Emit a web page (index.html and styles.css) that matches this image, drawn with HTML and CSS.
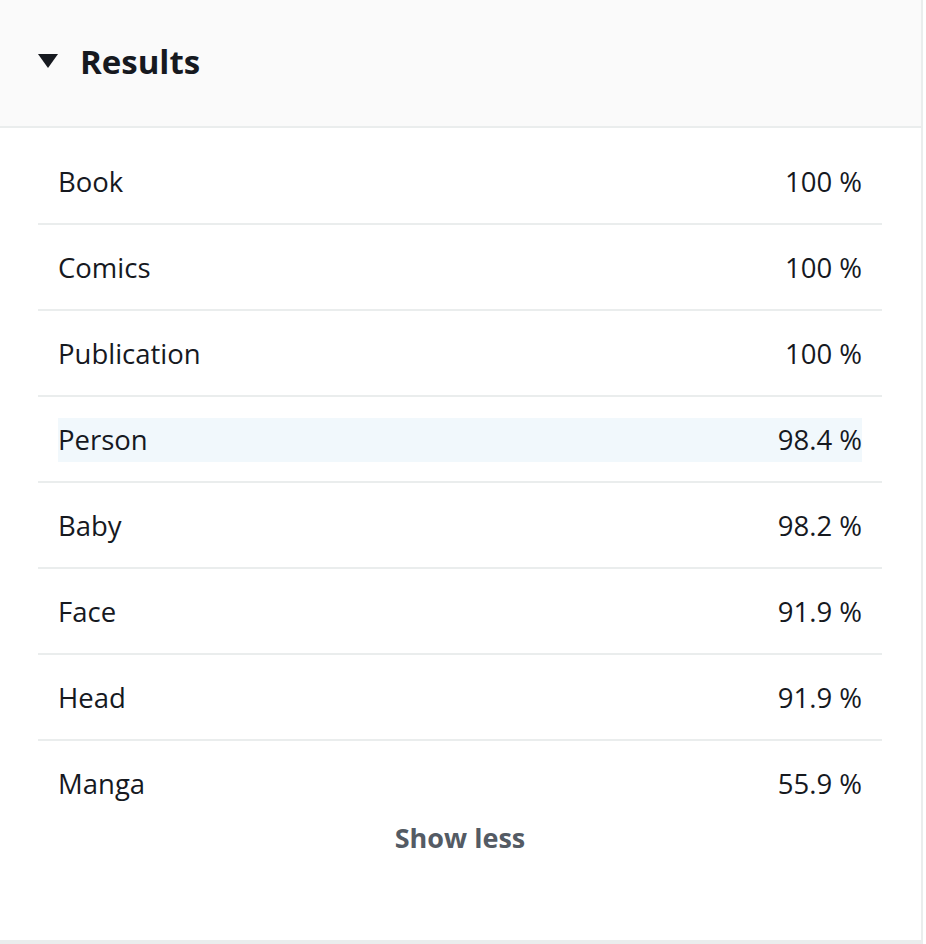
FILE: index.html
```html
<!DOCTYPE html>
<html>
<head>
<meta charset="utf-8">
<link rel="stylesheet" href="styles.css">
</head>
<body>
<section class="panel">
  <header class="panel-header">
    <svg class="caret" width="20" height="14" viewBox="0 0 20 14"><path d="M0 0 H20 L10 14 Z" fill="#16191f"/></svg>
    <h2 class="title">Results</h2>
  </header>
  <div class="panel-body">
    <ul class="results">
      <li class="row"><div class="row-inner"><span>Book</span><span>100 %</span></div></li>
      <li class="row"><div class="row-inner"><span>Comics</span><span>100 %</span></div></li>
      <li class="row"><div class="row-inner"><span>Publication</span><span>100 %</span></div></li>
      <li class="row"><div class="row-inner hover"><span>Person</span><span>98.4 %</span></div></li>
      <li class="row"><div class="row-inner"><span>Baby</span><span>98.2 %</span></div></li>
      <li class="row"><div class="row-inner"><span>Face</span><span>91.9 %</span></div></li>
      <li class="row"><div class="row-inner"><span>Head</span><span>91.9 %</span></div></li>
      <li class="row last"><div class="row-inner"><span>Manga</span><span>55.9 %</span></div></li>
    </ul>
    <div class="toggle">Show less</div>
  </div>
</section>
</body>
</html>
```
FILE: styles.css
```css
html, body {
  margin: 0;
  padding: 0;
  background: #ffffff;
}
body {
  font-family: "Open Sans", "Liberation Sans", sans-serif;
  color: #16191f;
}
.panel {
  width: 921px;
  height: 940px;
  border-right: 2px solid #eaeded;
  border-bottom: 4px solid #eaeded;
  background: #ffffff;
}
.panel-header {
  height: 128px;
  box-sizing: border-box;
  background: #fafafa;
  border-bottom: 2px solid #eaeded;
  display: flex;
  align-items: center;
  padding-left: 38px;
  padding-bottom: 2px;
  gap: 22px;
}
.caret {
  display: block;
  margin-top: -2px;
}
.title {
  margin: 0;
  font-size: 33px;
  font-weight: 700;
  line-height: 44px;
  color: #16191f;
}
.panel-body {
  padding: 11px 39px 0 38px;
}
.results {
  list-style: none;
  margin: 0;
  padding: 0;
}
.row {
  padding: 21px 0 19px;
  border-bottom: 2px solid #eaeded;
}
.row.last {
  border-bottom: none;
}
.row-inner {
  margin: 0 20px;
  height: 44px;
  display: flex;
  justify-content: space-between;
  align-items: center;
  font-size: 27.5px;
  font-weight: 500;
  line-height: 44px;
}
.row-inner.hover {
  background: #f1f8fc;
}
.toggle {
  margin-top: -9px;
  text-align: center;
  font-size: 27px;
  font-weight: 700;
  line-height: 44px;
  color: #545b64;
}
```
